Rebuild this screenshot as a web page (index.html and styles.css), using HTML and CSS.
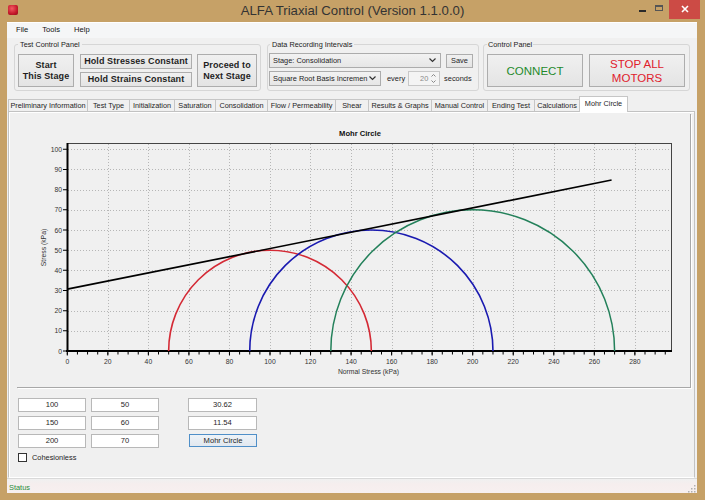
FILE: index.html
```html
<!DOCTYPE html>
<html>
<head>
<meta charset="utf-8">
<title>ALFA Triaxial Control</title>
<link rel="stylesheet" href="styles.css">
</head>
<body>
<div class="window">
  <div class="titlebar">
    <div class="tb-left"><div class="app-icon"></div></div>
    <div class="title">ALFA Triaxial Control (Version 1.1.0.0)</div>
    <div class="wincontrols">
      <svg class="wc-min" width="16" height="19" viewBox="0 0 16 19"><rect x="3" y="10" width="7" height="2" fill="#2a2a2a"/></svg>
      <svg class="wc-max" width="17" height="19" viewBox="0 0 17 19"><rect x="3.5" y="5.5" width="7" height="5" fill="none" stroke="#555" stroke-width="1"/><rect x="3.5" y="5.5" width="7" height="1.5" fill="#555"/></svg>
      <div class="wc-close"><svg width="31" height="19" viewBox="0 0 31 19"><path d="M13 6 L19 12 M19 6 L13 12" stroke="#fff" stroke-width="1.6"/></svg></div>
    </div>
  </div>
  <div class="client">
    <div class="menubar"><span>File</span><span>Tools</span><span>Help</span></div>
    <div class="toolbar">
      <fieldset class="group g-test">
        <legend>Test Control Panel</legend>
        <div class="g-row">
          <button class="btn bold tall w-start">Start<br>This Stage</button>
          <div class="btn-col">
            <button class="btn bold half">Hold Stresses Constant</button>
            <button class="btn bold half2">Hold Strains Constant</button>
          </div>
          <button class="btn bold tall w-proceed">Proceed to<br>Next Stage</button>
        </div>
      </fieldset>
      <fieldset class="group g-data">
        <legend>Data Recording Intervals</legend>
        <div class="data-rows">
          <div class="d-row1">
            <div class="combo c-stage"><span>Stage: Consolidation</span><svg width="7" height="5" viewBox="0 0 7 5"><path d="M0.5 0.5 L3.5 3.5 L6.5 0.5" fill="none" stroke="#333" stroke-width="1.2"/></svg></div>
            <button class="btn save">Save</button>
          </div>
          <div class="d-row2">
            <div class="combo c-basis"><span>Square Root Basis Incremen</span><svg width="7" height="5" viewBox="0 0 7 5"><path d="M0.5 0.5 L3.5 3.5 L6.5 0.5" fill="none" stroke="#333" stroke-width="1.2"/></svg></div>
            <span class="lbl-every">every</span>
            <div class="spin"><span>20</span><svg width="5" height="11" viewBox="0 0 5 11"><path d="M0.5 3.5 L2.5 1.5 L4.5 3.5 M0.5 7.5 L2.5 9.5 L4.5 7.5" fill="none" stroke="#888" stroke-width="1"/></svg></div>
            <span class="lbl-seconds">seconds</span>
          </div>
        </div>
      </fieldset>
      <fieldset class="group g-control">
        <legend>Control Panel</legend>
        <div class="g-row">
          <button class="btn big connect">CONNECT</button>
          <button class="btn big stop">STOP ALL<br>MOTORS</button>
        </div>
      </fieldset>
    </div>
    <div class="tabs">
      <div class="tab">Preliminary Information</div>
      <div class="tab">Test Type</div>
      <div class="tab">Initialization</div>
      <div class="tab">Saturation</div>
      <div class="tab">Consolidation</div>
      <div class="tab">Flow / Permeability</div>
      <div class="tab">Shear</div>
      <div class="tab">Results &amp; Graphs</div>
      <div class="tab">Manual Control</div>
      <div class="tab">Ending Test</div>
      <div class="tab">Calculations</div>
      <div class="tab active">Mohr Circle</div>
    </div>
    <div class="tabpage">
      <div class="chart">
        <svg width="673" height="273" viewBox="17 114 673 273" font-family="Liberation Sans, Arial, sans-serif">
          <text x="360" y="136" text-anchor="middle" font-size="7.6" font-weight="bold" fill="#111">Mohr Circle</text>
          <path d="M108.5 144V350 M148.5 144V350 M189.5 144V350 M229.5 144V350 M270.5 144V350 M310.5 144V350 M351.5 144V350 M392.5 144V350 M432.5 144V350 M473.5 144V350 M513.5 144V350 M554.5 144V350 M594.5 144V350 M635.5 144V350 M68 331.5H670 M68 311.5H670 M68 290.5H670 M68 270.5H670 M68 250.5H670 M68 230.5H670 M68 210.5H670 M68 190.5H670 M68 169.5H670 M68 149.5H670" stroke="#b6b6b6" stroke-width="1" stroke-dasharray="1 2" fill="none"/>
          <rect x="67.5" y="143.5" width="604" height="208" fill="none" stroke="#444" stroke-width="1"/>
          <line x1="67.5" y1="143" x2="67.5" y2="352" stroke="#000" stroke-width="2"/>
          <line x1="66" y1="351" x2="672" y2="351" stroke="#000" stroke-width="2"/>
          <line x1="66.8" y1="353" x2="672" y2="353" stroke="#000" stroke-width="3" stroke-dasharray="1 9.135"/>
          <line x1="66.8" y1="354" x2="672" y2="354" stroke="#000" stroke-width="3" stroke-dasharray="1 39.54"/>
          <line x1="65" y1="351.5" x2="65" y2="148" stroke="#000" stroke-width="4" stroke-dasharray="1 19.17"/>
          <g font-size="6.8" fill="#333" text-anchor="end">
            <text x="62" y="353.5">0</text>
            <text x="62" y="333.3">10</text>
            <text x="62" y="313.2">20</text>
            <text x="62" y="293">30</text>
            <text x="62" y="272.8">40</text>
            <text x="62" y="252.7">50</text>
            <text x="62" y="232.5">60</text>
            <text x="62" y="212.3">70</text>
            <text x="62" y="192.1">80</text>
            <text x="62" y="172">90</text>
            <text x="62" y="151.8">100</text>
          </g>
          <g font-size="6.8" fill="#333" text-anchor="middle">
            <text x="67.3" y="364">0</text>
            <text x="107.8" y="364">20</text>
            <text x="148.4" y="364">40</text>
            <text x="188.9" y="364">60</text>
            <text x="229.5" y="364">80</text>
            <text x="270" y="364">100</text>
            <text x="310.5" y="364">120</text>
            <text x="351.1" y="364">140</text>
            <text x="391.6" y="364">160</text>
            <text x="432.2" y="364">180</text>
            <text x="472.7" y="364">200</text>
            <text x="513.2" y="364">220</text>
            <text x="553.8" y="364">240</text>
            <text x="594.3" y="364">260</text>
            <text x="634.9" y="364">280</text>
          </g>
          <text x="368.5" y="374" text-anchor="middle" font-size="6.8" fill="#333">Normal Stress (kPa)</text>
          <text transform="translate(45.5 247.5) rotate(-90)" text-anchor="middle" font-size="6.8" fill="#333">Stress (kPa)</text>
          <path d="M168.65 351 A101.35 100.85 0 0 1 371.35 351" fill="none" stroke="#d42a35" stroke-width="1.6"/>
          <path d="M249.73 351 A121.62 121.02 0 0 1 492.97 351" fill="none" stroke="#1a1ab0" stroke-width="1.6"/>
          <path d="M330.81 351 A141.89 141.19 0 0 1 614.59 351" fill="none" stroke="#23805a" stroke-width="1.5"/>
          <path d="M67.3 289.2 L611.6 180" fill="none" stroke="#000" stroke-width="1.7"/>
        </svg>
      </div>
      <div class="inputs">
        <div class="in-grid">
          <div class="tbox">100</div><div class="tbox">50</div>
          <div class="tbox">150</div><div class="tbox">60</div>
          <div class="tbox">200</div><div class="tbox">70</div>
        </div>
        <div class="in-col">
          <div class="tbox wide">30.62</div>
          <div class="tbox wide">11.54</div>
          <button class="btn mohr">Mohr Circle</button>
        </div>
      </div>
      <label class="check"><span class="box"></span><span>Cohesionless</span></label>
    </div>
    <div class="statusbar">
      <span class="status">Status</span>
      <svg class="grip" width="8" height="8" viewBox="0 0 8 8" fill="#b0b0b0"><rect x="6" y="0" width="1.5" height="1.5"/><rect x="3" y="3" width="1.5" height="1.5"/><rect x="6" y="3" width="1.5" height="1.5"/><rect x="0" y="6" width="1.5" height="1.5"/><rect x="3" y="6" width="1.5" height="1.5"/><rect x="6" y="6" width="1.5" height="1.5"/></svg>
    </div>
  </div>
</div>
</body>
</html>
```
FILE: styles.css
```css
* { box-sizing: border-box; }
html, body { margin: 0; padding: 0; }
body {
  width: 705px;
  height: 500px;
  overflow: hidden;
  background: #c6a167;
  font-family: "Liberation Sans", Arial, sans-serif;
  font-size: 7.4px;
  color: #1e1e1e;
}
.window { width: 705px; height: 500px; display: flex; flex-direction: column; }

/* title bar */
.titlebar {
  height: 22px;
  display: grid;
  grid-template-columns: 1fr auto 1fr;
  align-items: start;
}
.app-icon {
  width: 10px; height: 10px;
  margin: 5px 0 0 8px;
  border-radius: 2px;
  background: radial-gradient(circle at 40% 35%, #f35a62 0%, #c4182a 60%, #8e0e1a 100%);
}
.title {
  font-size: 13.2px;
  line-height: 22px;
  color: #333333;
  white-space: nowrap;
}
.wincontrols { justify-self: end; display: flex; align-items: flex-start; margin-right: 5px; }
.wc-close { width: 31px; height: 19px; background: #cc4b45; }
.wc-close svg { display: block; }

/* client */
.client {
  margin-left: 7px;
  width: 690px;
  height: 471px;
  background: #f0f0f0;
  border-top: 1px solid #ffffff;
  display: flex;
  flex-direction: column;
}
.menubar {
  height: 15px;
  line-height: 13px;
  padding-left: 9px;
  display: flex;
  gap: 14px;
  font-size: 7.6px;
  color: #111;
  background: #f5f6f7;
}

.toolbar { height: 57px; padding-top: 2px; display: flex; align-items: flex-start; }
.group {
  margin: 0;
  border: 1px solid #d6d6d6;
  border-radius: 3px;
  height: 51px;
  padding: 5px 3px 3px 3px;
  min-width: 0;
}
.group legend {
  padding: 0 2px;
  line-height: 9px;
  font-size: 7.3px;
  color: #222;
}
.g-test { margin-left: 7px; width: 247px; }
.g-data { margin-left: 6px; width: 212px; padding-left: 1px; padding-top: 4px; }
.g-data legend { margin-left: 1px; }
.g-control { margin-left: 4px; width: 207px; }
.g-control legend { padding: 0 1px; }

.g-row { display: flex; gap: 6px; }
.btn {
  font-family: "Liberation Sans", Arial, sans-serif;
  background: linear-gradient(#f0f0f0, #e4e4e4);
  border: 1px solid #adadad;
  border-radius: 0;
  color: #1e1e1e;
  padding: 0;
  margin: 0;
  text-align: center;
}
.bold { font-weight: bold; font-size: 9px; letter-spacing: 0.1px; line-height: 11px; }
.tall { height: 33px; }
.w-start { width: 56px; }
.w-proceed { width: 60px; margin-left: -1px; }
.btn-col { display: flex; flex-direction: column; gap: 3px; width: 112px; }
.half { height: 15px; }
.half2 { height: 15px; }

.data-rows { display: flex; flex-direction: column; gap: 3px; }
.d-row1, .d-row2 { display: flex; align-items: center; }
.combo {
  display: flex;
  align-items: center;
  justify-content: space-between;
  background: linear-gradient(#f2f2f2, #e6e6e6);
  border: 1px solid #acacac;
  padding: 0 4px 0 3px;
  font-size: 7.4px;
  color: #1e1e1e;
}
.combo svg { display: block; }
.c-stage { width: 172px; height: 15px; }
.save { width: 27px; height: 14px; margin-left: 5px; font-size: 7.4px; }
.c-basis { width: 112px; height: 15px; }
.lbl-every { margin-left: 6px; }
.spin {
  margin-left: 3px;
  width: 32px;
  height: 15px;
  border: 1px solid #c8c8c8;
  background: #f4f4f4;
  display: flex;
  align-items: center;
  justify-content: space-between;
  padding: 0 3px 0 11px;
  color: #8a8a8a;
}
.spin svg { display: block; }
.lbl-seconds { margin-left: 4px; }

.big { width: 96px; height: 33px; font-size: 11.5px; line-height: 14px; }
.connect { color: #1f8a2c; }
.stop { color: #e0202c; }

/* tabs */
.tabs { height: 16px; display: flex; align-items: flex-end; margin-left: 1px; }
.tab {
  height: 12px;
  border: 1px solid #c6c6c6;
  border-bottom: none;
  margin-right: -1px;
  background: #f0f0f0;
  font-size: 7.3px;
  line-height: 11px;
  text-align: center;
  white-space: nowrap;
  color: #1e1e1e;
}
.tab:nth-child(1) { width: 80px; }
.tab:nth-child(2) { width: 43px; }
.tab:nth-child(3) { width: 46px; }
.tab:nth-child(4) { width: 42px; }
.tab:nth-child(5) { width: 53px; }
.tab:nth-child(6) { width: 69px; }
.tab:nth-child(7) { width: 34px; }
.tab:nth-child(8) { width: 64px; }
.tab:nth-child(9) { width: 57px; }
.tab:nth-child(10) { width: 48px; }
.tab:nth-child(11) { width: 46px; }
.tab.active {
  width: 49px;
  height: 16px;
  margin-bottom: -1px;
  background: #ffffff;
  line-height: 11px;
  padding-top: 1px;
  position: relative;
  z-index: 1;
}

.tabpage {
  margin-left: 1px;
  width: 687px;
  height: 367px;
  border: 1px solid #c2c2c2;
  border-bottom-color: #ffffff;
  box-shadow: inset 1px 1px 0 #ffffff;
  background: #f0f0f0;
}
.chart {
  margin: 2px 0 0 8px;
  width: 674px;
  height: 274px;
  border-right: 1px solid #a8a8a8;
  border-bottom: 1px solid #a8a8a8;
  box-shadow: 1px 1px 0 #ffffff;
}
.chart svg { display: block; }

.inputs { display: flex; gap: 29px; margin: 10px 0 0 9px; }
.in-grid { display: grid; grid-template-columns: 68px 68px; column-gap: 5px; row-gap: 4px; }
.in-col { display: flex; flex-direction: column; gap: 4px; }
.tbox {
  height: 14px;
  border: 1px solid #b8b8b8;
  background: #ffffff;
  font-size: 7.6px;
  line-height: 12px;
  text-align: center;
  color: #1e1e1e;
}
.wide { width: 69px; }
.mohr {
  width: 68px;
  height: 13px;
  margin-left: 1px;
  font-size: 7.6px;
  border-color: #4f8fc8;
  background: linear-gradient(#eef3f8, #e2e8ef);
}
.check { display: flex; align-items: center; gap: 5px; margin: 5px 0 0 9px; font-size: 7.4px; }
.check .box { width: 9px; height: 9px; border: 1px solid #333; background: #fff; }

.statusbar {
  height: 15px;
  display: flex;
  justify-content: space-between;
  align-items: flex-start;
  background: linear-gradient(#f0f0f0, #f6eeee 40%, #f7f0f0);
  border-top: 1px solid #d9d9d9;
}
.status { color: #2a8c3a; font-size: 7.4px; line-height: 11px; padding: 3px 0 0 2px; }
.grip { margin: 6px 1px 0 0; }
```
